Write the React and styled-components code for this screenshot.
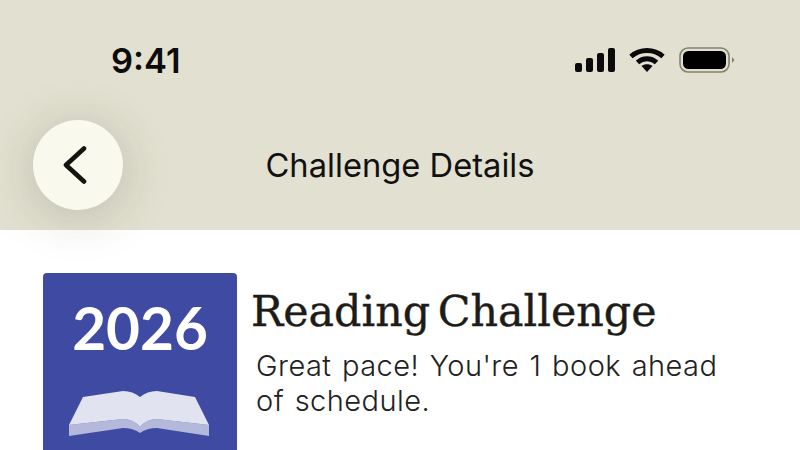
import styled, { createGlobalStyle } from "styled-components";

const GlobalStyle = createGlobalStyle`
  html, body {
    margin: 0;
    padding: 0;
    background: #fff;
  }
`;

const Screen = styled.div`
  width: 800px;
  height: 450px;
  overflow: hidden;
  background: #fff;
  font-family: "Inter", "Liberation Sans", sans-serif;
`;

const Header = styled.header`
  height: 230px;
  box-sizing: border-box;
  background: #e2e0d0;
  padding-top: 38px;
`;

const StatusBar = styled.div`
  display: flex;
  align-items: center;
  justify-content: space-between;
  height: 44px;
  padding: 0 65px 0 111px;
`;

const Time = styled.span`
  font-size: 34.5px;
  font-weight: 600;
  color: #0c0c0a;
`;

const StatusIcons = styled.div`
  display: flex;
  align-items: center;
  gap: 14px;
`;

const NavBar = styled.div`
  display: grid;
  grid-template-columns: 90px 1fr 90px;
  align-items: center;
  margin-top: 38px;
  padding: 0 33px;
`;

const BackButton = styled.button`
  width: 90px;
  height: 90px;
  padding: 0;
  border: none;
  border-radius: 50%;
  background: #f9f9ee;
  box-shadow: 0 6px 50px rgba(60, 60, 40, 0.22);
  display: flex;
  align-items: center;
  justify-content: center;
`;

const NavTitle = styled.h1`
  margin: 0;
  text-align: center;
  font-size: 32.7px;
  font-weight: 400;
  color: #111;
`;

const Content = styled.section`
  display: flex;
  align-items: flex-start;
  gap: 15px;
  padding: 43px 43px 0;
`;

const Cover = styled.div`
  flex: none;
  width: 194px;
  height: 290px;
  box-sizing: border-box;
  padding-top: 19px;
  border-radius: 4px;
  background: #3f4aa3;
  display: flex;
  flex-direction: column;
  align-items: center;
`;

const CoverYear = styled.span`
  font-family: "Lato", sans-serif;
  font-size: 58.5px;
  font-weight: 700;
  line-height: 70px;
  color: #fff;
`;

const BookArt = styled.svg`
  margin-top: 28px;
`;

const Info = styled.div`
  display: flex;
  flex-direction: column;
`;

const Title = styled.h2`
  margin: 10px 0 0 -1px;
  font-family: "DejaVu Serif", serif;
  font-size: 42.8px;
  font-weight: 400;
  line-height: 56px;
  word-spacing: -6px;
  color: #1e1c19;
  -webkit-text-stroke: 0.4px #1e1c19;
`;

const Blurb = styled.p`
  margin: 10px 0 0 4px;
  width: 480px;
  font-family: "Inter", sans-serif;
  font-size: 29px;
  font-weight: 300;
  line-height: 34.5px;
  letter-spacing: 0.45px;
  word-spacing: 2px;
  color: #23211e;
`;

const SignalIcon = () => (
  <svg width="40" height="26" viewBox="0 0 40 26">
    <rect x="0" y="16" width="7" height="9" rx="2" fill="#0a0a0a" />
    <rect x="11" y="11" width="7" height="14" rx="2" fill="#0a0a0a" />
    <rect x="22" y="6" width="7" height="19" rx="2" fill="#0a0a0a" />
    <rect x="33" y="1" width="7" height="24" rx="2" fill="#0a0a0a" />
  </svg>
);

const WifiIcon = () => (
  <svg width="36" height="26" viewBox="0 0 36 26" fill="none" stroke="#0a0a0a" strokeWidth="5">
    <path d="M2 9.5C11 1.5 25 1.5 34 9.5" />
    <path d="M8.5 15.5C14 10.5 22 10.5 27.5 15.5" />
    <path d="M12.5 19L18 25L23.5 19C20.5 16.5 15.5 16.5 12.5 19Z" fill="#0a0a0a" stroke="none" />
  </svg>
);

const BatteryIcon = () => (
  <svg width="56" height="26" viewBox="0 0 56 26">
    <rect x="1" y="1" width="49" height="24" rx="8" fill="none" stroke="#85836f" strokeWidth="1.6" />
    <rect x="4" y="4" width="43" height="18" rx="5.5" fill="#000" />
    <path d="M53 10L55.5 13L53 16Z" fill="#85836f" />
  </svg>
);

const ChevronLeft = styled.svg`
  margin-right: 8px;
`;

const OpenBook = () => (
  <BookArt width="142" height="46" viewBox="0 0 142 46">
    <path d="M0 35L54 29Q64 29 71 37Q78 29 88 29L140 35V46L88 38Q78 38 71 43Q64 38 54 38L0 46Z" fill="#b4b9dc" />
    <path d="M0 35L14 7L54 1Q64 1 71 7Q78 1 88 1L126 7L140 35L88 29Q78 29 71 37Q64 29 54 29Z" fill="#e1e3f0" />
  </BookArt>
);

export default function App() {
  return (
    <Screen>
      <GlobalStyle />
      <Header>
        <StatusBar>
          <Time>9:41</Time>
          <StatusIcons>
            <SignalIcon />
            <WifiIcon />
            <BatteryIcon />
          </StatusIcons>
        </StatusBar>
        <NavBar>
          <BackButton aria-label="Back">
            <ChevronLeft width="26" height="40" viewBox="0 0 26 40" fill="none" stroke="#14140f" strokeWidth="4.6" strokeLinecap="round" strokeLinejoin="round">
              <path d="M23 3.5L5 20L23 36.5" />
            </ChevronLeft>
          </BackButton>
          <NavTitle>Challenge Details</NavTitle>
        </NavBar>
      </Header>
      <Content>
        <Cover>
          <CoverYear>2026</CoverYear>
          <OpenBook />
        </Cover>
        <Info>
          <Title>Reading Challenge</Title>
          <Blurb>Great pace! You're 1 book ahead of schedule.</Blurb>
        </Info>
      </Content>
    </Screen>
  );
}
